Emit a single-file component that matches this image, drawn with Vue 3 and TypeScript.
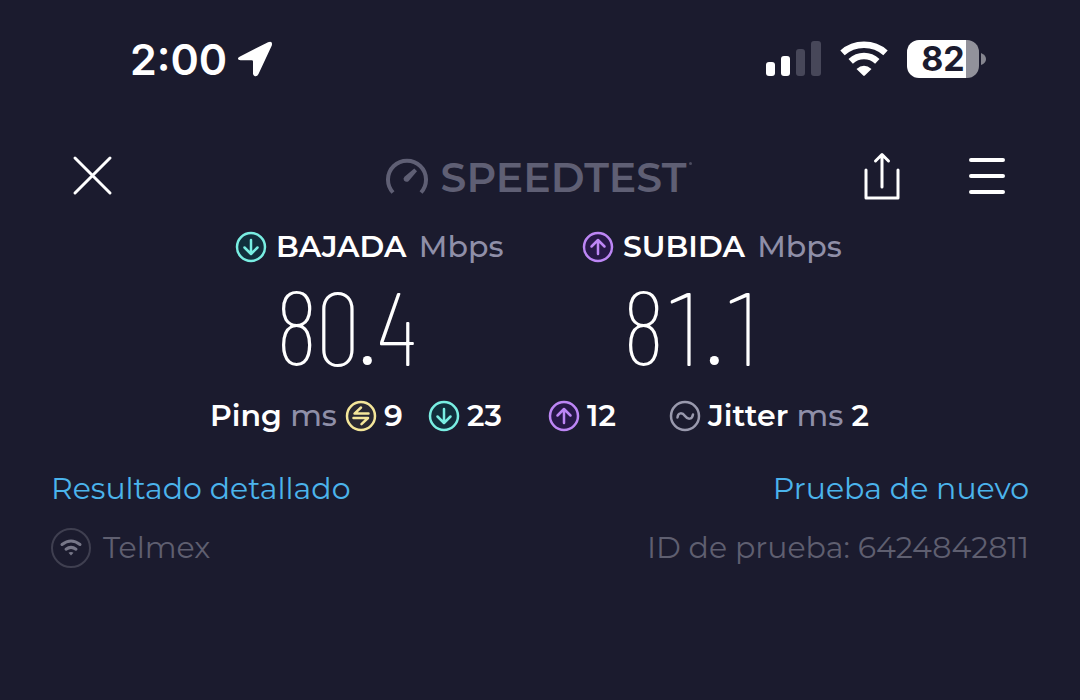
<script setup lang="ts">
import { ref } from 'vue'

interface Speed {
  kind: 'down' | 'up'
  label: string
  value: string
}

const speeds = ref<Speed[]>([
  { kind: 'down', label: 'BAJADA', value: '80.4' },
  { kind: 'up', label: 'SUBIDA', value: '81.1' },
])

const ping = ref({ idle: 9, down: 23, up: 12 })
const jitter = ref(2)
const provider = ref('Telmex')
const testId = ref('6424842811')
</script>

<template>
  <div class="screen">
    <header class="status">
      <div class="clock">
        <span class="time">2:00</span>
        <svg width="36" height="36" viewBox="0 0 36 36" aria-hidden="true">
          <path d="M3 15.500 31 1.200Q36 -.5 34.800 4.500L21.500 33Q20 36 17.500 35Q16 34.200 16 32.500V20.500Q16 19.200 14.800 19.200H3.500Q.8 19 .9 17.400Q1 16.500 3 15.500Z" fill="#fff" />
        </svg>
      </div>
      <div class="indicators">
        <svg width="56" height="36" viewBox="0 0 56 36" aria-hidden="true">
          <rect x="1" y="21" width="9" height="14" rx="3" fill="#fff" />
          <rect x="16" y="15" width="9" height="20" rx="3" fill="#fff" />
          <rect x="31" y="8" width="9" height="27" rx="3" fill="#474759" />
          <rect x="46" y="0" width="10" height="35" rx="3" fill="#474759" />
        </svg>
        <svg width="48" height="36" viewBox="0 0 48 36" fill="none" stroke="#fff" stroke-width="6.500" aria-hidden="true">
          <path d="M2.500 11.800Q11.500 3.700 24 3.700T45.500 11.800" />
          <path d="M10.700 20.300Q16.500 15 24 15T37.300 20.300" />
          <path d="M16.500 28Q24 21.500 31.500 28L24.800 34.500Q24 35.300 23.200 34.500Z" fill="#fff" stroke="none" />
        </svg>
        <div class="battery">
          <span class="charge">82</span>
          <svg width="5" height="12" viewBox="0 0 5 12" aria-hidden="true">
            <path d="M0 0Q5 2 5 6T0 12Z" fill="#85858f" />
          </svg>
        </div>
      </div>
    </header>

    <nav class="toolbar">
      <button class="icon-button" type="button" aria-label="Cerrar">
        <svg width="42" height="42" viewBox="0 0 42 42" fill="none" stroke="#fff" stroke-width="3" stroke-linecap="round">
          <path d="M3 3 38 38M38 3 3 38" />
        </svg>
      </button>
      <div class="brand">
        <svg width="42" height="38" viewBox="0 0 42 38" fill="none" stroke="#5f5f74" stroke-width="4" aria-hidden="true">
          <path d="M7 34.500A19 19 0 1 1 35 34.500" />
          <path d="M28.300 10.500 31 13.200 22.500 23.200Q20 24.500 18 22.500Q16.800 20.300 18.500 18.800Z" fill="#5f5f74" stroke="none" />
        </svg>
        <span class="wordmark">SPEEDTEST</span>
        <i class="mark"></i>
      </div>
      <div class="actions">
        <button class="icon-button" type="button" aria-label="Compartir">
          <svg width="36" height="48" viewBox="0 0 36 48" fill="none" stroke="#fff" stroke-width="3" stroke-linecap="round" stroke-linejoin="round">
            <path d="M2 18V46H34V18M18 35V3M11.500 9 18 2.500 24.500 9" />
          </svg>
        </button>
        <button class="icon-button" type="button" aria-label="Menú">
          <svg width="38" height="38" viewBox="0 0 38 38" stroke="#fff" stroke-width="4" stroke-linecap="round">
            <path d="M3 3H35M3 19H35M3 35H35" />
          </svg>
        </button>
      </div>
    </nav>

    <main>
      <section class="speeds">
        <article v-for="speed in speeds" :key="speed.kind" class="speed">
          <svg class="badge" :class="speed.kind" viewBox="0 0 32 32" aria-hidden="true">
            <circle cx="16" cy="16" r="14" />
            <path v-if="speed.kind === 'down'" d="M16 9V22M9.500 16.500 16 23 22.500 16.500" />
            <path v-else d="M16 23V10M9.500 15.500 16 9 22.500 15.500" />
          </svg>
          <h2 class="label">{{ speed.label }} <span class="unit">Mbps</span></h2>
          <p class="value">{{ speed.value }}</p>
        </article>
      </section>

      <section class="metrics">
        <div class="metric ping">
          <span class="name">Ping <span class="unit">ms</span></span>
          <svg class="badge idle" viewBox="0 0 32 32" aria-hidden="true">
            <circle cx="16" cy="16" r="14" />
            <path d="M23.500 13.600H9.500L16 7.500M8.500 18H23L16.500 24.200" />
          </svg>
          <span>{{ ping.idle }}</span>
        </div>
        <div class="metric">
          <svg class="badge down" viewBox="0 0 32 32" aria-hidden="true">
            <circle cx="16" cy="16" r="14" />
            <path d="M16 9V22M9.500 16.500 16 23 22.500 16.500" />
          </svg>
          <span>{{ ping.down }}</span>
        </div>
        <div class="metric">
          <svg class="badge up" viewBox="0 0 32 32" aria-hidden="true">
            <circle cx="16" cy="16" r="14" />
            <path d="M16 23V10M9.500 15.500 16 9 22.500 15.500" />
          </svg>
          <span>{{ ping.up }}</span>
        </div>
        <div class="metric">
          <svg class="badge jitter" viewBox="0 0 32 32" aria-hidden="true">
            <circle cx="16" cy="16" r="14" />
            <path d="M8.500 17.500C9 12 13.500 12.500 16 16S23 20 24 14.500" />
          </svg>
          <span>Jitter <span class="unit">ms</span> {{ jitter }}</span>
        </div>
      </section>

      <section class="row links">
        <a href="#detalle">Resultado detallado</a>
        <a href="#prueba">Prueba de nuevo</a>
      </section>

      <section class="row details">
        <div class="provider">
          <svg width="40" height="42" viewBox="1 0 40 42" fill="none" aria-hidden="true">
            <circle cx="21" cy="21" r="19" stroke="#3f3f50" stroke-width="2" />
            <path d="M12 17.500Q21 10.500 30 17.500M16 22.200Q21 18.500 26 22.200" stroke="#777788" stroke-width="3" stroke-linecap="round" />
            <path d="M18.500 25.800Q21 24.300 23.500 25.800L21 28.500Z" fill="#777788" />
          </svg>
          <span>{{ provider }}</span>
        </div>
        <span>ID de prueba: {{ testId }}</span>
      </section>
    </main>
  </div>
</template>

<style>
body {
  margin: 0;
  background: #1b1b2e;
}
</style>

<style scoped>
.screen {
  min-height: 100vh;
  box-sizing: border-box;
  background: #1b1b2e;
  color: #fff;
  font-family: Montserrat, Inter, "Liberation Sans", sans-serif;
  font-size: 30px;
  line-height: 40px;
}

svg {
  display: block;
  flex: none;
}

.status {
  display: flex;
  justify-content: space-between;
  align-items: center;
  height: 40px;
  padding: 39px 94px 0 130px;
}

.clock {
  display: flex;
  align-items: center;
  gap: 10px;
  font-family: Inter, "Liberation Sans", sans-serif;
}

.time {
  font-size: 43px;
  font-weight: 600;
}

.indicators {
  display: flex;
  align-items: center;
  gap: 19px;
}

.battery {
  display: flex;
  align-items: center;
  gap: 2px;
}

.charge {
  width: 72px;
  height: 38px;
  border-radius: 12px;
  background: linear-gradient(90deg, #fff 82%, #92929b 82%);
  color: #1b1b2e;
  font-family: Inter, "Liberation Sans", sans-serif;
  font-size: 34px;
  font-weight: 700;
  line-height: 38px;
  text-align: center;
}

.toolbar {
  display: grid;
  grid-template-columns: 1fr auto 1fr;
  align-items: center;
  height: 50px;
  padding: 72px 74px 0 72px;
}

.icon-button {
  justify-self: start;
  padding: 0;
  border: 0;
  background: none;
  cursor: pointer;
}

.brand {
  display: flex;
  align-items: center;
  gap: 13px;
  padding-top: 2px;
  color: #5f5f74;
}

.wordmark {
  font-size: 41px;
  font-weight: 600;
}

.mark {
  align-self: flex-start;
  width: 3px;
  height: 3px;
  margin: 5px 0 0 -10px;
  border-radius: 50%;
  background: #4b4b5e;
}

.actions {
  display: flex;
  align-items: center;
  justify-content: flex-end;
  gap: 68px;
}

.speeds {
  display: grid;
  grid-template-columns: 347fr 498fr;
  padding: 26px 0 0 235px;
}

.speed {
  display: grid;
  grid-template-columns: 32px 1fr;
  column-gap: 9px;
  align-items: center;
}

.label {
  margin: 0;
  font-size: 30px;
  font-weight: 600;
  white-space: nowrap;
}

.unit {
  color: #8f8fa8;
  font-weight: 500;
}

.label .unit {
  margin-left: 4px;
}

.value {
  grid-column: 2;
  margin: 0 0 2px;
  font-family: "Barlow Condensed", "Roboto Condensed", Roboto, Inter, sans-serif;
  font-size: 104px;
  font-weight: 200;
  font-variant-numeric: tabular-nums;
  line-height: 116px;
}

.badge {
  width: 32px;
  height: 32px;
  fill: none;
  stroke-width: 2.5;
  stroke-linecap: round;
  stroke-linejoin: round;
}

.down {
  stroke: #79eee2;
  fill: #112f3c;
}

.badge path {
  fill: none;
}

.up {
  stroke: #bd86f5;
  fill: #271848;
}

.idle {
  stroke: #f4e69a;
  fill: #292832;
}

.jitter {
  stroke: #9999ad;
}

.metrics {
  display: grid;
  grid-template-columns: 218fr 120fr 121fr 411fr;
  padding: 11px 0 0 210px;
  font-weight: 600;
  white-space: nowrap;
}

.metric {
  display: flex;
  align-items: center;
  gap: 7px;
}

.name {
  width: 128px;
}

.row {
  display: flex;
  justify-content: space-between;
  align-items: center;
  padding: 0 51px;
  font-size: 30px;
  font-weight: 400;
}

.links {
  margin-top: 33px;
}

.links a {
  color: #4bb4ec;
  text-decoration: none;
}

.details {
  margin-top: 18px;
  color: #5f5f70;
}

.provider {
  display: flex;
  align-items: center;
  gap: 12px;
}
</style>
